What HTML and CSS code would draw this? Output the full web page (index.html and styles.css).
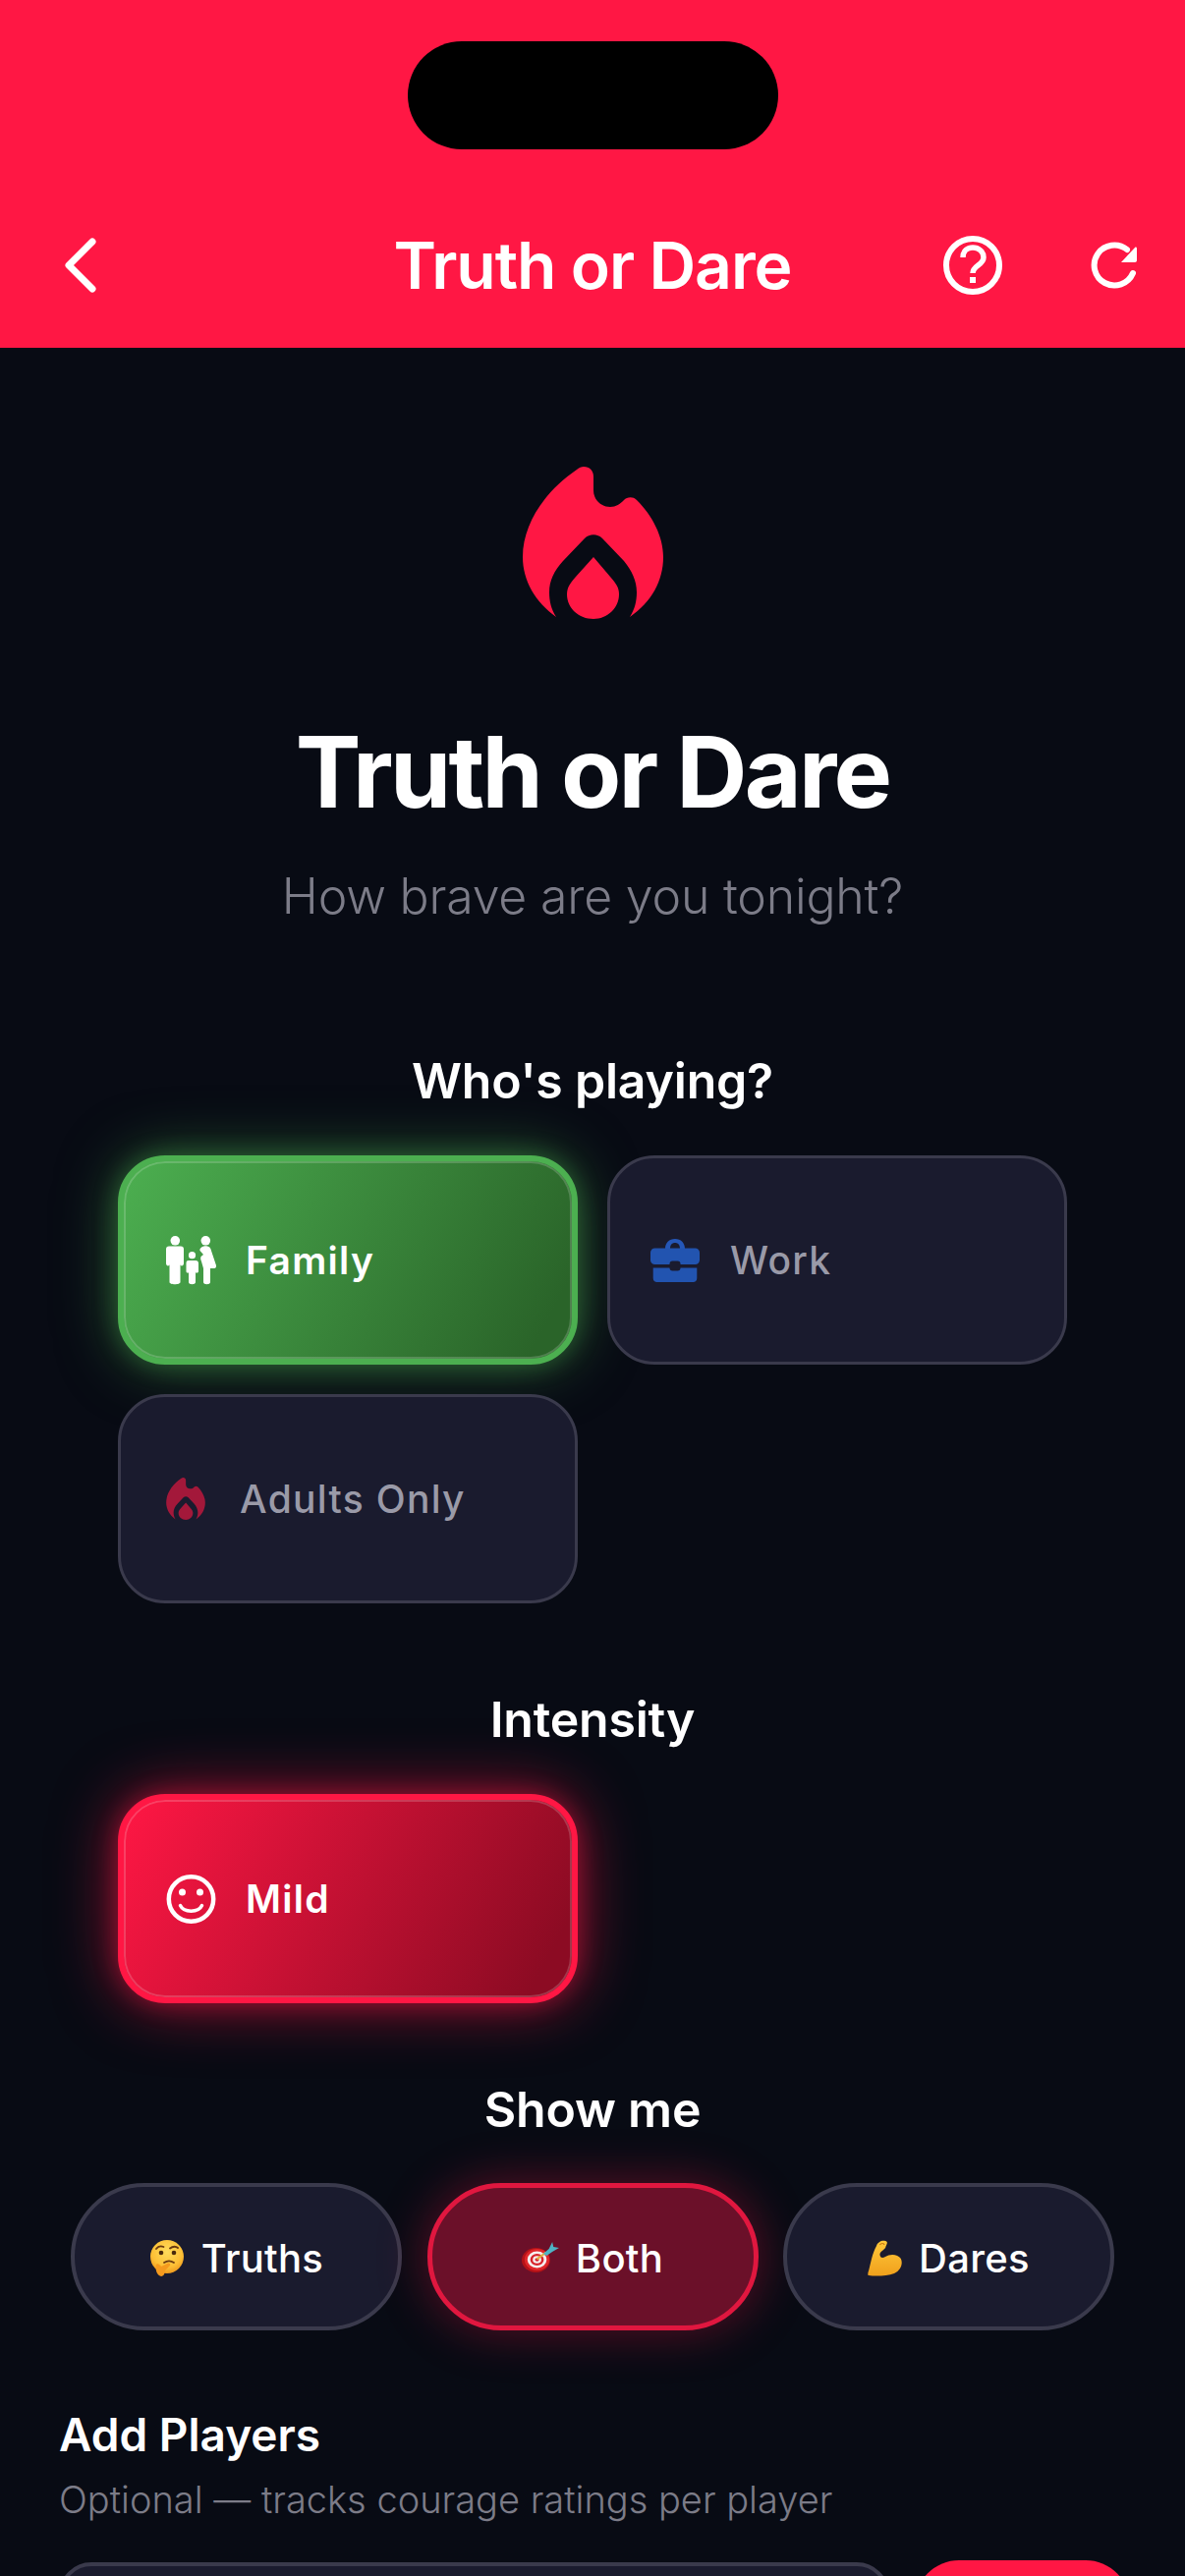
FILE: index.html
```html
<!DOCTYPE html>
<html lang="en">
<head>
    <meta charset="utf-8">
    <title>Truth or Dare</title>
    <link rel="stylesheet" href="styles.css">
</head>
<body>
    <svg class="defs" width="0" height="0" aria-hidden="true">
        <symbol id="flame" viewBox="0 0 143 155">
            <path d="M62 0C68 0 72 4 72 10L72 24C72 34 80 41 89 41C95 41 99 38 103 34C106 31 112 30 116 34C132 50 143 71 143 92C143 116 131 138 109 153C114 145 116 137 116 128C116 116 111 106 103 96L81 73C76 68 68 68 63 73L41 96C32 106 27 116 27 128C27 137 29 145 34 153C13 138 0 116 0 92C0 57 24 24 55 3C57 1 60 0 62 0Z"/>
            <path d="M72 92L89 112C95 119 98 123 98 130C98 144 86 155 72 155C57 155 45 144 45 130C45 123 48 119 54 112Z"/>
        </symbol>
    </svg>

    <!-- barra superior -->
    <header class="topbar">
        <div class="island"></div>
        <nav class="navrow">
            <button class="navbtn back" aria-label="Back">
                <svg width="40" height="60" viewBox="0 0 40 60"><path d="M31 6L7 30L31 54" class="line"/></svg>
            </button>
            <div class="navtitle">Truth or Dare</div>
            <div class="navactions">
                <button class="navbtn" aria-label="Help">
                    <svg width="60" height="60" viewBox="0 0 60 60">
                        <circle cx="30" cy="30" r="27" class="line thin"/>
                        <path d="M20 22C20 15 25 12 30 12C36 12 41 16 41 22C41 30 30 30 30 38" class="line help"/>
                        <rect x="27" y="42" width="6" height="6" fill="#fff"/>
                    </svg>
                </button>
                <button class="navbtn" aria-label="Restart">
                    <svg width="48" height="48" viewBox="0 0 48 48">
                        <path d="M43 32A20.500 20.500 0 1 1 37 8" class="line thin"/>
                        <path d="M31 21L45 6C46 5 47 6 47 7L47 19C47 20 46 21 45 21Z" fill="#fff"/>
                    </svg>
                </button>
            </div>
        </nav>
    </header>

    <main class="content">
        <svg class="logo" width="143" height="155"><use href="#flame"/></svg>
        <h1 class="title">Truth or Dare</h1>
        <p class="subtitle">How brave are you tonight?</p>

        <h2 class="section who">Who's playing?</h2>
        <div class="cards">
            <button class="card card-green">
                <svg class="ico" width="51" height="50" viewBox="0 0 51 50" fill="#fff">
                    <circle cx="9.300" cy="4.800" r="4.800"/>
                    <path d="M3 10.500H15C17 10.500 18 11.500 18 13.500V28C18 31 14.500 31 14.500 29V47C14.500 50 3.500 50 3.500 47V29C3.500 31 0 31 0 28V13.500C0 11.500 1 10.500 3 10.500Z"/>
                    <circle cx="26.500" cy="19.700" r="3.600"/>
                    <path d="M23 25H30C32 25 33 26 33 28V36C33 38 30 38 30 37V47C30 50 23 50 23 47V37C23 38 20.500 38 20.500 36V28C20.500 26 21 25 23 25Z"/>
                    <circle cx="40.300" cy="4.800" r="4.800"/>
                    <path d="M37 11C38.500 10 42 10 43.500 11C45 12 45.500 13 46 15L51 30C51.500 32 50 33 48 33H45V47C45 50 38 50 38 47V33L36 26C35 24 35 23 35.500 21L38 19L34.500 15C34 13 35.500 12 37 11Z"/>
                </svg>
                <span>Family</span>
            </button>
            <button class="card">
                <svg class="ico work-ico" width="50" height="44" viewBox="0 0 50 44">
                    <path d="M15 10V10C15 4 19 0 25 0C31 0 35 4 35 10H30C30 6 28 4 25 4C22 4 20 6 20 10Z" fill="#2557b8"/>
                    <rect y="9.500" width="50" height="16.500" rx="4.500" fill="#2254b0"/>
                    <path d="M2.700 29.500H47.300V40C47.300 42.500 45.500 44 43.500 44H6.500C4.500 44 2.700 42.500 2.700 40Z" fill="#2254b0"/>
                    <rect x="19.500" y="22.500" width="11" height="10" rx="3" fill="#1a1b2e"/>
                </svg>
                <span>Work</span>
            </button>
            <button class="card">
                <svg class="ico flame-ico" width="40" height="43"><use href="#flame"/></svg>
                <span>Adults Only</span>
            </button>
        </div>

        <h2 class="section intensity">Intensity</h2>
        <div class="cards">
            <button class="card card-red">
                <svg class="ico" width="51" height="50" viewBox="0 0 51 50">
                    <circle cx="25.500" cy="25" r="22.700" fill="none" stroke="#fff" stroke-width="4.500"/>
                    <circle cx="16.500" cy="18" r="3.500" fill="#fff"/>
                    <circle cx="34.500" cy="18" r="3.500" fill="#fff"/>
                    <path d="M14.500 31.500C18 39 33 39 36.500 31.500" fill="none" stroke="#fff" stroke-width="3.500" stroke-linecap="round"/>
                </svg>
                <span>Mild</span>
            </button>
        </div>

        <h2 class="section showme">Show me</h2>
        <div class="pills">
            <button class="pill">
                <svg class="emoji" width="36" height="37" viewBox="0 0 36 37" role="img" aria-label="thinking face">
                    <defs>
                        <radialGradient id="faceGrad" cx="0.500" cy="0.350" r="0.650">
                            <stop offset="0" stop-color="#ffdc5c"/>
                            <stop offset="0.700" stop-color="#fdbf35"/>
                            <stop offset="1" stop-color="#ee9a1f"/>
                        </radialGradient>
                    </defs>
                    <circle cx="18" cy="17" r="17" fill="url(#faceGrad)"/>
                    <path d="M7 9C9 6.500 12 6 14.500 7M21 8.500C24 6 27.500 6.500 29 8" fill="none" stroke="#6b3a10" stroke-width="1.800" stroke-linecap="round"/>
                    <circle cx="12" cy="13" r="2.300" fill="#4a2a0c"/>
                    <circle cx="25" cy="13" r="2.300" fill="#4a2a0c"/>
                    <path d="M15 23C18 21 22 21 25 23" fill="none" stroke="#6b3a10" stroke-width="1.800" stroke-linecap="round"/>
                    <path d="M7 25C6 29 7 36 12 37C15 37 16 33 16 31L21 26C22 24 20 23 18 24L12 27C11 25 8 23 7 25Z" fill="#f59a1e"/>
                </svg>
                <span>Truths</span>
            </button>
            <button class="pill pill-on">
                <svg class="emoji" width="38" height="32" viewBox="0 0 33 32" preserveAspectRatio="none" role="img" aria-label="direct hit">
                    <circle cx="12.500" cy="18.500" r="12.500" fill="#b51217"/>
                    <circle cx="13.500" cy="18" r="11" fill="#e0262a"/>
                    <circle cx="13.500" cy="18" r="8.500" fill="#f6eeee"/>
                    <circle cx="13.500" cy="18" r="6" fill="#d8222a"/>
                    <circle cx="13.500" cy="18" r="3.800" fill="#f6eeee"/>
                    <circle cx="13.500" cy="18" r="1.800" fill="#d8222a"/>
                    <path d="M14 17L21 11" stroke="#e0b040" stroke-width="2" stroke-linecap="round"/>
                    <path d="M19 12L24 7L27 0L28 5L33 6L27 10L22 14Z" fill="#4fb3c4"/>
                </svg>
                <span>Both</span>
            </button>
            <button class="pill">
                <svg class="emoji" width="35" height="37" viewBox="0 0 31 37" preserveAspectRatio="none" role="img" aria-label="flexed biceps">
                    <defs>
                        <linearGradient id="armGrad" x1="0" y1="0" x2="0" y2="1">
                            <stop offset="0" stop-color="#ffc83a"/>
                            <stop offset="1" stop-color="#f0a01c"/>
                        </linearGradient>
                    </defs>
                    <path d="M8 6C9 2 13 0 16 1C19 2 17 4 16 8C15 10 12 11 11 14C11 18 13 19 16 17C20 14 27 14 30 19C32 24 30 31 24 34C17 37 6 37 1 36C0 36 0 34 1 31C3 23 4 14 8 6Z" fill="url(#armGrad)"/>
                    <path d="M11 5C12 3 15 3 15 5" fill="none" stroke="#c97a12" stroke-width="1.200"/>
                </svg>
                <span>Dares</span>
            </button>
        </div>

        <section class="players">
            <h2 class="players-title">Add Players</h2>
            <p class="players-note">Optional — tracks courage ratings per player</p>
            <div class="players-row">
                <input class="players-input" type="text" aria-label="Player name">
                <button class="players-add" aria-label="Add player"></button>
            </div>
        </section>
    </main>
</body>
</html>
```

FILE: styles.css
```css
* {
    box-sizing: border-box;
}

html, body {
    margin: 0;
    padding: 0;
    height: 2622px;
    overflow: hidden;
}

body {
    font-family: Inter, "Noto Sans", sans-serif;
    background-color: #080b14;
    color: #fff;
}

button {
    font-family: inherit;
    color: inherit;
    border: none;
    background: none;
    padding: 0;
    cursor: pointer;
}

.defs {
    position: absolute;
}

/* barra superior */
.topbar {
    height: 354px;
    background-color: #ff1744;
    padding-top: 42px;
}

.island {
    width: 377px;
    height: 110px;
    margin: 0 auto;
    background-color: #000;
    border-radius: 55px;
}

.navrow {
    display: grid;
    grid-template-columns: 1fr auto 1fr;
    align-items: center;
    margin-top: 78px;
    padding: 0 48px;
}

.navbtn {
    display: flex;
}

.back {
    justify-self: start;
    margin-left: 15px;
}

.line {
    fill: none;
    stroke: #fff;
    stroke-width: 7;
    stroke-linecap: round;
    stroke-linejoin: round;
}

.thin {
    stroke-width: 6;
}

.help {
    stroke-width: 5.500;
    stroke-linecap: butt;
}

.navtitle {
    font-size: 66px;
    font-weight: 600;
    letter-spacing: -1.100px;
    line-height: 80px;
}

.navactions {
    display: flex;
    align-items: center;
    justify-content: flex-end;
    gap: 90px;
}

/* contenido */
.content {
    display: flex;
    flex-direction: column;
    align-items: center;
}

.logo {
    margin-top: 121px;
    fill: #ff1744;
}

.title {
    margin: 96px 0 0;
    font-size: 100px;
    font-weight: 700;
    line-height: 120px;
    letter-spacing: -2.800px;
}

.subtitle {
    margin: 36px 0 0;
    font-size: 50px;
    font-weight: 300;
    line-height: 60px;
    letter-spacing: -0.200px;
    color: #7c7c88;
}

.section {
    margin: 0;
    font-size: 50px;
    font-weight: 600;
    line-height: 60px;
    letter-spacing: -0.200px;
}

.who {
    margin-top: 128px;
}

.intensity {
    margin-top: 88px;
}

.showme {
    margin-top: 78px;
}

.cards {
    display: grid;
    grid-template-columns: 468px 468px;
    gap: 30px;
    width: 100%;
    padding: 0 120px;
    margin-top: 46px;
}

.card {
    display: flex;
    align-items: center;
    gap: 31px;
    height: 213px;
    padding-left: 46px;
    font-size: 39px;
    font-weight: 500;
    letter-spacing: 1.300px;
    color: #9a9aa8;
    background-color: #1a1b2e;
    border: 3px solid #3a3a4c;
    border-radius: 48px;
}

.card-green,
.card-red {
    gap: 30px;
    padding-left: 43px;
    font-weight: 600;
    color: #fff;
    border-width: 6px;
}

.card-green {
    background-image: linear-gradient(118deg, #4caf50, #2a6429 92%);
    border-color: #4caf50;
    box-shadow: 0 0 24px rgba(76, 175, 80, 0.35), 0 0 60px rgba(76, 175, 80, 0.5), inset 0 0 0 2px rgba(255, 255, 255, 0.18);
}

.card-red {
    background-image: linear-gradient(118deg, #ff1744, #8c0b23 92%);
    border-color: #ff1744;
    box-shadow: 0 0 24px rgba(255, 23, 68, 0.35), 0 0 64px rgba(255, 23, 68, 0.6), inset 0 0 0 2px rgba(255, 255, 255, 0.18);
}

.flame-ico {
    fill: #a3183a;
    margin-right: 4px;
}

.work-ico {
    margin-left: -5px;
}

.pills {
    display: flex;
    justify-content: space-between;
    width: 100%;
    padding: 0 72px;
    margin-top: 45px;
}

.pill {
    display: flex;
    align-items: center;
    justify-content: center;
    gap: 17px;
    width: 337px;
    height: 150px;
    padding-top: 2px;
    font-size: 40px;
    font-weight: 500;
    letter-spacing: 0.300px;
    background-color: #1a1b2e;
    border: 4px solid #3a3a4c;
    border-radius: 75px;
}

.pill-on {
    background-color: #6b1029;
    border: 5px solid #e0173f;
    box-shadow: 0 0 50px rgba(255, 23, 68, 0.35);
}

.players {
    width: 100%;
    padding: 0 56px 0 60px;
    margin-top: 76px;
}

.players-title {
    margin: 0;
    font-size: 46px;
    font-weight: 600;
    line-height: 60px;
}

.players-note {
    margin: 11px 0 0;
    font-size: 38px;
    font-weight: 300;
    line-height: 50px;
    color: #7c7c88;
}

.players-row {
    display: flex;
    align-items: flex-start;
    gap: 26px;
    margin-top: 37px;
}

.players-input {
    flex: 1;
    height: 130px;
    margin-top: 2px;
    background-color: #1a1b2e;
    border: 4px solid #3a3a4c;
    border-radius: 33px;
}

.players-add {
    width: 219px;
    height: 130px;
    background-color: #ff1744;
    border-radius: 45px;
}
```
